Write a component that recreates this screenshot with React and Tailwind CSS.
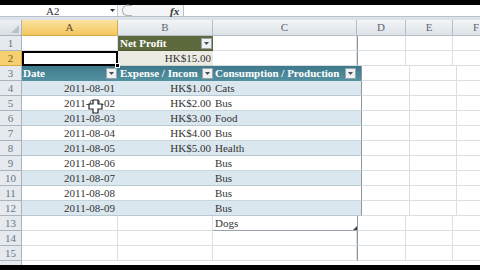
import React from "react";

const serif = { fontFamily: '"Liberation Serif", "Times New Roman", serif' };

const colW = ["w-[22px]", "w-[96px]", "w-[95px]", "w-[144px]", "w-[49px]", "w-[47px]", "flex-1"];

function Drop() {
  return (
    <div className="w-[11px] h-[11px] bg-[#eef0f1] border border-[#9aa4ab] flex items-center justify-center shrink-0">
      <svg width="5" height="3" viewBox="0 0 5 3"><path d="M0 0h5L2.5 3z" fill="#44505a" /></svg>
    </div>
  );
}

function RowHead({ n, sel }) {
  return (
    <div
      className={`${colW[0]} h-full shrink-0 flex items-center justify-center text-[11px] border-r border-b ${
        sel ? "bg-[#f6cf6e] text-[#6a5a30] border-[#d9a949]" : "bg-[#e6eaef] text-[#6a7480] border-[#aab4c0]"
      }`}
    >
      {n}
    </div>
  );
}

function Blank({ i, cls = "" }) {
  return <div className={`${colW[i]} h-full shrink-0 border-r border-b border-[#dbdfe4] bg-white ${cls}`} />;
}

function RightCells() {
  return (
    <>
      <div className="w-[49px] h-full shrink-0 border-r border-b border-[#dbdfe4] border-l border-l-[#8d959d] bg-white" />
      <div className="w-[47px] h-full shrink-0 border-r border-b border-[#dbdfe4] bg-white" />
      <div className="flex-1 h-full border-b border-[#dbdfe4] bg-white" />
    </>
  );
}

const data = [
  ["2011-08-01", "HK$1.00", "Cats"],
  ["2011-08-02", "HK$2.00", "Bus"],
  ["2011-08-03", "HK$3.00", "Food"],
  ["2011-08-04", "HK$4.00", "Bus"],
  ["2011-08-05", "HK$5.00", "Health"],
  ["2011-08-06", "", "Bus"],
  ["2011-08-07", "", "Bus"],
  ["2011-08-08", "", "Bus"],
  ["2011-08-09", "", "Bus"],
];

export default function App() {
  return (
    <div className="w-[480px] h-[270px] bg-black flex flex-col overflow-hidden relative text-[#333]" style={serif}>
      <div className="h-[5px] bg-black shrink-0" />
      {/* formula bar */}
      <div className="h-[12px] bg-white flex items-stretch shrink-0 border-b border-[#b9c2cc]">
        <div className="w-[118px] flex items-center relative text-[11px] text-[#333] border-r border-[#c5ccd4]">
          <span className="absolute left-[46px] top-[-2px]">A2</span>
          <svg className="absolute left-[110px] top-[4px]" width="5" height="3" viewBox="0 0 5 3"><path d="M0 0h5L2.5 3z" fill="#333" /></svg>
        </div>
        <div className="w-[65px] flex items-center relative bg-[#f4f5f7]">
          <div className="absolute left-[4px] top-[0px] w-[10px] h-[11px] rounded-l-full border-l border-t border-b border-[#aab2bb]" />
          <span className="absolute left-[8px] top-[-3px] text-[8px] text-[#8a929a]">"</span>
          <span className="absolute left-[52px] top-[-2px] text-[11px] italic font-bold text-[#333]">fx</span>
        </div>
        <div className="flex-1 bg-white border-l border-[#b9c2cc]" />
      </div>
      <div className="h-[3px] bg-[#dde2e8] shrink-0" />
      {/* column headers */}
      <div className="h-[16px] flex shrink-0 text-[11px]">
        <div className="w-[22px] h-full bg-gradient-to-b from-[#eef1f4] to-[#d9dee4] border-r border-b border-[#aab4c0] relative">
          <svg className="absolute right-[2px] bottom-[2px]" width="8" height="8" viewBox="0 0 8 8"><path d="M8 0v8H0z" fill="#b9c1ca" /></svg>
        </div>
        <div className="w-[96px] h-full bg-gradient-to-b from-[#fbe3a0] to-[#f3c65c] border-r border-b border-[#d9a949] flex items-center justify-center text-[#5a4a20]">A</div>
        {[["B", "w-[95px]"], ["C", "w-[144px]"], ["D", "w-[49px]"], ["E", "w-[47px]"]].map(([l, w]) => (
          <div key={l} className={`${w} h-full bg-gradient-to-b from-[#f3f5f7] to-[#dde2e7] border-r border-b border-[#b5bec8] flex items-center justify-center text-[#5d6670]`}>{l}</div>
        ))}
        <div className="flex-1 h-full bg-gradient-to-b from-[#f3f5f7] to-[#dde2e7] border-b border-[#b5bec8] flex items-center pl-[20px] text-[#5d6670]">F</div>
      </div>
      {/* row 1 */}
      <div className="h-[15px] flex shrink-0 text-[11px]">
        <RowHead n={1} />
        <Blank i={1} />
        <div className="w-[95px] h-full bg-[#5d6a3d] flex items-center justify-between pl-[2px] pr-[1px] border-b border-[#4f5a33]">
          <span className="text-white font-bold">Net Profit</span>
          <Drop />
        </div>
        <Blank i={3} />
        <RightCells />
      </div>
      {/* row 2 */}
      <div className="h-[15px] flex shrink-0 text-[11px]">
        <RowHead n={2} sel />
        <div className="w-[96px] h-full bg-white border-2 border-black relative">
          <div className="absolute right-[-4px] bottom-[-4px] w-[5px] h-[5px] bg-black border border-white" />
        </div>
        <div className="w-[95px] h-full bg-[#ebebe4] flex items-center justify-end pr-[2px] border-b border-[#cfd3cc]">HK$15.00</div>
        <Blank i={3} />
        <RightCells />
      </div>
      {/* row 3 header */}
      <div className="h-[15px] flex shrink-0 text-[11px]">
        <RowHead n={3} />
        <div className="w-[339px] h-full flex bg-gradient-to-b from-[#3e7a8b] to-[#5390a0] text-white font-bold">
          <div className="w-[96px] flex items-center justify-between pl-[1px] pr-[1px]"><span>Date</span><Drop /></div>
          <div className="w-[95px] flex items-center justify-between pl-[2px] pr-[0px] overflow-hidden"><span className="whitespace-nowrap">Expense / Incom</span><Drop /></div>
          <div className="w-[144px] flex items-center justify-between pl-[2px] pr-[1px]"><span className="whitespace-nowrap">Consumption / Production</span><Drop /></div>
        </div>
        <RightCells />
      </div>
      {data.map((r, idx) => (
        <div key={idx} className="h-[15px] flex shrink-0 text-[11px]">
          <RowHead n={idx + 4} />
          <div className={`w-[339px] h-full flex border-b ${idx % 2 === 0 ? "bg-[#dbe7ee] border-[#b8c9d2]" : "bg-white border-[#c8d6de]"}`}>
            <div className="w-[96px] flex items-center justify-end pr-[3px]">{r[0]}</div>
            <div className="w-[95px] flex items-center justify-end pr-[2px]">{r[1]}</div>
            <div className="w-[144px] flex items-center pl-[2px]">{r[2]}</div>
          </div>
          <RightCells />
        </div>
      ))}
      {/* row 13 */}
      <div className="h-[15px] flex shrink-0 text-[11px]">
        <RowHead n={13} />
        <div className="w-[96px] h-full border-r border-b border-[#dbdfe4] bg-white" />
        <div className="w-[95px] h-full border-r border-b border-[#dbdfe4] bg-white" />
        <div className="w-[144px] h-full border-b border-[#9aa3ab] bg-white flex items-center pl-[2px] relative">
          Dogs
          <svg className="absolute right-[0px] bottom-[0px]" width="4" height="4" viewBox="0 0 4 4"><path d="M4 0v4H0z" fill="#444" /></svg>
        </div>
        <RightCells />
      </div>
      {[14, 15].map((n) => (
        <div key={n} className="h-[15px] flex shrink-0 text-[11px]">
          <RowHead n={n} />
          <Blank i={1} />
          <Blank i={2} />
          <Blank i={3} />
          <RightCells />
        </div>
      ))}
      <div className="h-[4px] flex shrink-0">
        <div className="w-[22px] bg-[#e6eaef] border-r border-[#aab4c0]" />
        <div className="flex-1 bg-white" />
      </div>
      {/* cursor */}
      <svg className="absolute left-[88px] top-[99px]" width="16" height="16" viewBox="0 0 16 16">
        <path d="M5 1h5v4h4v5h-4v4H5v-4H1V5h4z" fill="#fff" stroke="#222" strokeWidth="1.2" />
      </svg>
    </div>
  );
}
